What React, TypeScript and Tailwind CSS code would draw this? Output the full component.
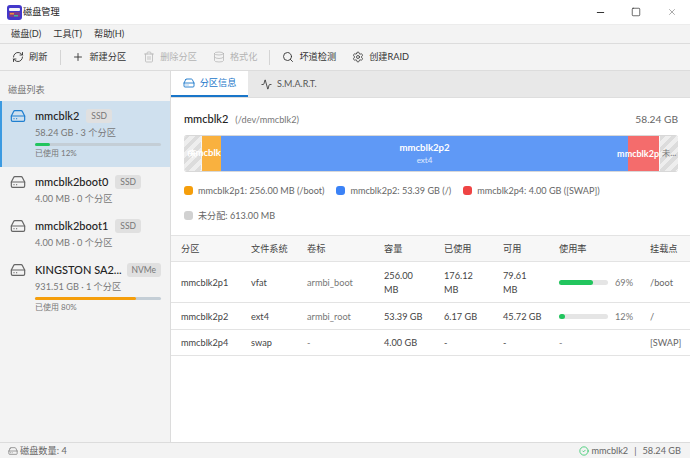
import { Activity, CheckCircle2, Database, HardDrive, Minus, Plus, RefreshCw, Search, Settings, Square, Trash2, X } from "lucide-react"

const FONT = "font-['Lato','Noto_Sans_CJK_SC',sans-serif]"

interface Disk {
  name: string
  tag: string
  info: string
  used?: number
  usedColor?: string
}

const disks: Disk[] = [
  { name: "mmcblk2", tag: "SSD", info: "58.24 GB · 3 个分区", used: 12, usedColor: "bg-[#22c55e]" },
  { name: "mmcblk2boot0", tag: "SSD", info: "4.00 MB · 0 个分区" },
  { name: "mmcblk2boot1", tag: "SSD", info: "4.00 MB · 0 个分区" },
  { name: "KINGSTON SA2...", tag: "NVMe", info: "931.51 GB · 1 个分区", used: 80, usedColor: "bg-[#f59e0b]" },
]

function DiskRow({ disk, active }: { disk: Disk; active?: boolean }) {
  return (
    <div className={`flex gap-[9px] pr-[9px] pt-[7px] ${active ? "bg-[#cfe0ee] border-l-2 border-[#3b9ae1] pl-[8px] h-[66px]" : disk.used ? "h-[66px] pl-[10px]" : "h-[44px] pl-[10px]"}`}>
      <HardDrive size={16} strokeWidth={1.8} className={`shrink-0 ${active ? "text-[#1f7fd0]" : "text-[#666666]"}`} />
      <div className="flex-1 min-w-0">
        <div className="flex items-center justify-between h-[16px]">
          <div className="flex items-center gap-[7px]">
            <span className="text-[11px] font-medium text-[#222222] whitespace-nowrap">{disk.name}</span>
            {disk.tag === "SSD" && <span className="rounded-[3px] bg-[#e0e0e0] px-[5px] text-[8.5px] leading-[14px] text-[#777777]">{disk.tag}</span>}
          </div>
          {disk.tag !== "SSD" && <span className="rounded-[3px] bg-[#e0e0e0] px-[5px] text-[8.5px] leading-[14px] text-[#777777]">{disk.tag}</span>}
        </div>
        <div className="mt-[1px] text-[9.2px] leading-[15px] text-[#777777] whitespace-nowrap">{disk.info}</div>
        {disk.used && (
          <>
            <div className="mt-[3px] h-[3px] rounded-full bg-[#c4ced6]">
              <div className={`h-full rounded-full ${disk.usedColor}`} style={{ width: `${disk.used}%` }} />
            </div>
            <div className="mt-[1px] text-[8px] leading-[12px] text-[#777777]">已使用 {disk.used}%</div>
          </>
        )}
      </div>
    </div>
  )
}

function ToolButton({ icon, label, disabled }: { icon: React.ReactNode; label: string; disabled?: boolean }) {
  return (
    <div className={`flex items-center gap-[5px] text-[9.2px] whitespace-nowrap ${disabled ? "text-[#b4b4b4]" : "text-[#333333]"}`}>
      {icon}
      <span>{label}</span>
    </div>
  )
}

const stripes = "bg-[repeating-linear-gradient(135deg,#dcdcdc_0px,#dcdcdc_4px,#eeeeee_4px,#eeeeee_8px)]"

function Legend({ color, label }: { color: string; label: string }) {
  return (
    <div className="flex items-center gap-[5px] text-[9.1px] text-[#666666] whitespace-nowrap">
      <span className={`h-[9px] w-[9px] rounded-[3px] ${color}`} />
      {label}
    </div>
  )
}

function Usage({ value }: { value: number }) {
  return (
    <div className="flex items-center gap-[7px]">
      <div className="h-[5px] w-[49px] rounded-full bg-[#e5e5e5]">
        <div className="h-full rounded-full bg-[#22c55e]" style={{ width: `${value}%` }} />
      </div>
      <span className="text-[9.2px] text-[#777777]">{value}%</span>
    </div>
  )
}

const cols = "grid grid-cols-[70px_56px_77px_60px_59px_56px_91px_1fr] pl-[10px] pt-[1px] items-center border-b border-[#e3e3e3] text-[9.2px] text-[#444444]"

export default function App() {
  return (
    <div className={`${FONT} flex h-[458px] w-[690px] flex-col overflow-hidden bg-white`}>
      {/* title bar */}
      <div className="flex h-[25px] shrink-0 items-center border-b border-[#ececec] pl-[7px]">
        <svg width="15" height="15" viewBox="0 0 15 15">
          <rect width="15" height="15" rx="3" fill="#4338ca" />
          <rect x="2" y="3" width="11" height="3" rx="1" fill="#f4f4f8" />
          <rect x="2" y="7" width="11" height="5" rx="1" fill="#7c3a8c" />
          <rect x="3" y="8" width="4" height="1.5" fill="#ef8c3c" />
          <rect x="7" y="10" width="4" height="1.5" fill="#3cb4a0" />
        </svg>
        <span className="ml-[1px] text-[9.2px] text-[#222222]">磁盘管理</span>
        <div className="ml-auto flex items-center">
          <div className="flex w-[36px] justify-center"><Minus size={11} strokeWidth={2} className="text-[#222222]" /></div>
          <div className="flex w-[36px] justify-center"><Square size={10} strokeWidth={1.6} className="text-[#222222]" /></div>
          <div className="flex w-[36px] justify-center"><X size={10} strokeWidth={1} className="text-[#333333]" /></div>
        </div>
      </div>

      {/* menu */}
      <div className="flex h-[19px] shrink-0 items-center gap-[12px] border-b border-[#dcdcdc] bg-[#f3f3f3] pl-[11px] text-[9.2px] text-[#333333]">
        <span>磁盘(D)</span>
        <span>工具(T)</span>
        <span>帮助(H)</span>
      </div>

      {/* toolbar */}
      <div className="flex h-[27px] shrink-0 items-center border-b border-[#dcdcdc] bg-[#f3f3f3] pl-[12px]">
        <ToolButton icon={<RefreshCw size={12} strokeWidth={1.8} />} label="刷新" />
        <div className="ml-[13px] mr-[11px] h-[15px] w-px bg-[#d4d4d4]" />
        <ToolButton icon={<Plus size={12} strokeWidth={1.8} />} label="新建分区" />
        <div className="w-[17px]" />
        <ToolButton disabled icon={<Trash2 size={12} strokeWidth={1.5} />} label="删除分区" />
        <div className="w-[16px]" />
        <ToolButton disabled icon={<Database size={12} strokeWidth={1.5} />} label="格式化" />
        <div className="mx-[12px] h-[15px] w-px bg-[#d4d4d4]" />
        <ToolButton icon={<Search size={12} strokeWidth={1.8} />} label="坏道检测" />
        <div className="w-[16px]" />
        <ToolButton icon={<Settings size={12} strokeWidth={1.6} />} label="创建RAID" />
      </div>

      <div className="flex min-h-0 flex-1">
        {/* sidebar */}
        <div className="w-[171px] shrink-0 border-r border-[#dcdcdc] bg-[#f3f3f3]">
          <div className="h-[30px] pl-[8px] pt-[12px] text-[9.2px] leading-[14px] text-[#777777]">磁盘列表</div>
          {disks.map((disk, i) => (
            <DiskRow key={disk.name} disk={disk} active={i === 0} />
          ))}
        </div>

        <div className="flex min-w-0 flex-1 flex-col">
          {/* tabs */}
          <div className="flex h-[27px] shrink-0 bg-[#e8e8e8] border-b border-[#dedede]">
            <div className="flex w-[77px] items-center justify-center gap-[5px] border-b-2 border-[#1976c9] bg-white text-[9.2px] text-[#1976c9]">
              <HardDrive size={12} strokeWidth={1.8} />
              分区信息
            </div>
            <div className="flex items-center gap-[5px] pl-[13px] text-[9px] text-[#555555]">
              <Activity size={11} strokeWidth={1.8} className="text-[#333333]" />
              S.M.A.R.T.
            </div>
          </div>

          {/* overview */}
          <div className="h-[138px] shrink-0 border-b border-[#e3e3e3] pl-[13px] pr-[12px] pt-[14px]">
            <div className="flex items-center h-[15px]">
              <span className="text-[11px] font-medium text-[#222222]">mmcblk2</span>
              <span className="ml-[7px] text-[9.2px] text-[#777777]">(/dev/mmcblk2)</span>
              <span className="ml-auto text-[10.2px] text-[#666666]">58.24 GB</span>
            </div>
            <div className="mt-[8px] flex h-[37px] rounded-[3px] border-y border-[#d8d8d8] text-white">
              <div className={`flex w-[18px] shrink-0 items-center justify-center rounded-l-[3px] border-r border-white/60 ${stripes}`}>
                <span className="text-[9px] whitespace-nowrap">未</span>
              </div>
              <div className="flex w-[19px] shrink-0 items-center justify-end bg-[#f9b13f] text-[9.6px] font-bold whitespace-nowrap">
                <span>mmcblk</span>
              </div>
              <div className="flex flex-1 flex-col items-center justify-center bg-[#5f99f6]">
                <span className="text-[9.6px] font-bold leading-[13px]">mmcblk2p2</span>
                <span className="text-[8px] leading-[12px] text-white/80">ext4</span>
              </div>
              <div className="flex w-[31px] shrink-0 items-center justify-end bg-[#f46c6c] text-[9px] font-bold whitespace-nowrap">
                <span>mmcblk2p</span>
              </div>
              <div className={`flex w-[19px] shrink-0 items-center justify-center overflow-hidden rounded-r-[3px] border-l border-white/70 ${stripes} text-[8.5px] text-[#777777]`}>
                未...
              </div>
            </div>
            <div className="mt-[12px] flex gap-[12px]">
              <Legend color="bg-[#f59e0b]" label="mmcblk2p1: 256.00 MB (/boot)" />
              <Legend color="bg-[#3b82f6]" label="mmcblk2p2: 53.39 GB (/)" />
              <Legend color="bg-[#ef4444]" label="mmcblk2p4: 4.00 GB ([SWAP])" />
            </div>
            <div className="mt-[11px]">
              <Legend color="bg-[#d1d1d1]" label="未分配: 613.00 MB" />
            </div>
          </div>

          {/* table */}
          <div className={`${cols} h-[26px] shrink-0 bg-[#f7f7f7]`}>
            <span>分区</span><span>文件系统</span><span>卷标</span><span>容量</span><span>已使用</span><span>可用</span><span>使用率</span><span>挂载点</span>
          </div>
          <div className={`${cols} h-[41px] shrink-0 leading-[14px]`}>
            <span>mmcblk2p1</span><span>vfat</span><span className="text-[#777777]">armbi_boot</span>
            <span>256.00<br />MB</span><span>176.12<br />MB</span><span>79.61<br />MB</span>
            <Usage value={69} /><span className="text-[#666666]">/boot</span>
          </div>
          <div className={`${cols} h-[27px] shrink-0`}>
            <span>mmcblk2p2</span><span>ext4</span><span className="text-[#777777]">armbi_root</span>
            <span>53.39 GB</span><span>6.17 GB</span><span>45.72 GB</span>
            <Usage value={12} /><span className="text-[#666666]">/</span>
          </div>
          <div className={`${cols} h-[26px] shrink-0`}>
            <span>mmcblk2p4</span><span>swap</span><span className="text-[#777777]">-</span>
            <span>4.00 GB</span><span>-</span><span>-</span>
            <span className="text-[#777777]">-</span><span className="text-[#666666]">[SWAP]</span>
          </div>
        </div>
      </div>

      {/* status bar */}
      <div className="flex h-[16px] shrink-0 items-center border-t border-[#dcdcdc] bg-[#f3f3f3] pl-[8px] pr-[9px] text-[9.2px] text-[#666666]">
        <HardDrive size={10} strokeWidth={1.5} />
        <span className="ml-[2px]">磁盘数量: 4</span>
        <CheckCircle2 size={10} strokeWidth={1.8} className="ml-auto text-[#22c55e]" />
        <span className="ml-[2px]">mmcblk2</span>
        <span className="mx-[6px]">|</span>
        <span>58.24 GB</span>
      </div>
    </div>
  )
}
